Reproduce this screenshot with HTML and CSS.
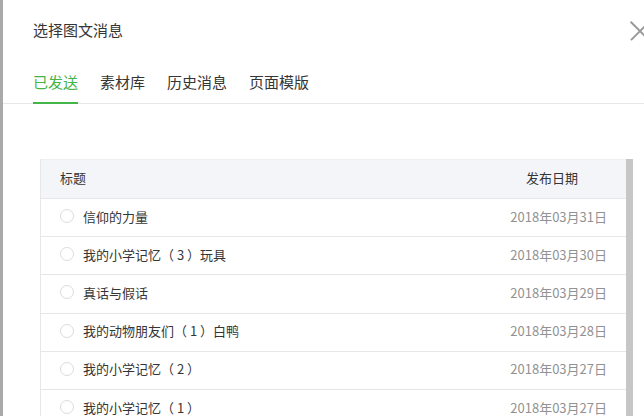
FILE: index.html
```html
<html>
  <head>
    <meta charset="utf-8">
    <title>选择图文消息</title>
    <link rel="stylesheet" href="styles.css">
  </head>
  <body>
	<div class="dialog">
		<div class="dialog-hd">
			<h3 class="dialog-title">选择图文消息</h3>
			<span class="close"></span>
		</div>
		<div class="tabs">
			<a class="tab active">已发送</a>
			<a class="tab">素材库</a>
			<a class="tab">历史消息</a>
			<a class="tab">页面模版</a>
		</div>
		<div class="list-wrap">
			<div class="list">
				<div class="list-head">
					<span class="col-title">标题</span>
					<span class="col-date">发布日期</span>
				</div>
				<div class="row"><i class="radio"></i><span class="name">信仰的力量</span><span class="date">2018年03月31日</span></div>
				<div class="row"><i class="radio"></i><span class="name">我的小学记忆（ 3 ）玩具</span><span class="date">2018年03月30日</span></div>
				<div class="row"><i class="radio"></i><span class="name">真话与假话</span><span class="date">2018年03月29日</span></div>
				<div class="row"><i class="radio"></i><span class="name">我的动物朋友们（ 1 ）白鸭</span><span class="date">2018年03月28日</span></div>
				<div class="row"><i class="radio"></i><span class="name">我的小学记忆（ 2 ）</span><span class="date">2018年03月27日</span></div>
				<div class="row"><i class="radio"></i><span class="name">我的小学记忆（ 1 ）</span><span class="date">2018年03月27日</span></div>
			</div>
			<div class="scrollbar"></div>
		</div>
	</div>
  </body>
</html>
```

FILE: styles.css
```css
body {
	margin: 0;
	background-color: #fff;
	color: #353535;
	font-family: "Noto Sans CJK SC", "Noto Sans", sans-serif;
	overflow: hidden;
}

.dialog {
	height: 416px;
	border-left: 3px solid #a9a9a9;
	background-color: #fff;
	overflow: hidden;
}

.dialog-hd {
	position: relative;
	height: 62px;
	padding-left: 30px;
}

.dialog-title {
	margin: 0;
	font-size: 15px;
	font-weight: normal;
	line-height: 60px;
	color: #353535;
}

/* close icon, cut by the window edge */
.close {
	position: absolute;
	right: -5px;
	top: 22px;
	width: 18px;
	height: 18px;
}

.close::before,
.close::after {
	content: "";
	position: absolute;
	left: -4px;
	top: 8px;
	width: 26px;
	height: 1.5px;
	background-color: #9a9a9a;
	transform: rotate(45deg);
}

.close::after {
	transform: rotate(-45deg);
}

.tabs {
	display: flex;
	padding-left: 30px;
	border-bottom: 1px solid #e4e8eb;
}

.tab {
	margin-right: 22px;
	font-size: 15px;
	line-height: 40px;
	color: #353535;
	border-bottom: 2px solid transparent;
	margin-bottom: -1px;
}

.tab.active {
	color: #44b549;
	border-bottom-color: #44b549;
}

.list-wrap {
	display: flex;
	margin-top: 55px;
	padding-left: 37px;
}

.list {
	width: 585px;
	border-left: 1px solid #e7e7eb;
}

.list-head {
	display: flex;
	justify-content: space-between;
	height: 39px;
	line-height: 36px;
	padding: 0 48px 0 19px;
	background-color: #f4f5f9;
	font-size: 13px;
	color: #353535;
	border-top: 1px solid #eef0f3;
	box-sizing: border-box;
}

.row {
	display: flex;
	align-items: center;
	height: 38.2px;
	padding: 0 19px 3px 19px;
	border-top: 1px solid #e7e7eb;
	box-sizing: border-box;
	font-size: 13px;
}

.row:first-of-type {
	border-top: none;
}

.radio {
	width: 12px;
	height: 12px;
	border: 1px solid #dcdcdc;
	border-radius: 50%;
	margin-right: 9px;
}

.name {
	flex: 1;
	color: #353535;
}

.date {
	color: #929292;
}

.scrollbar {
	width: 7px;
	height: 260px;
	background-color: #c6c6c6;
}
```
